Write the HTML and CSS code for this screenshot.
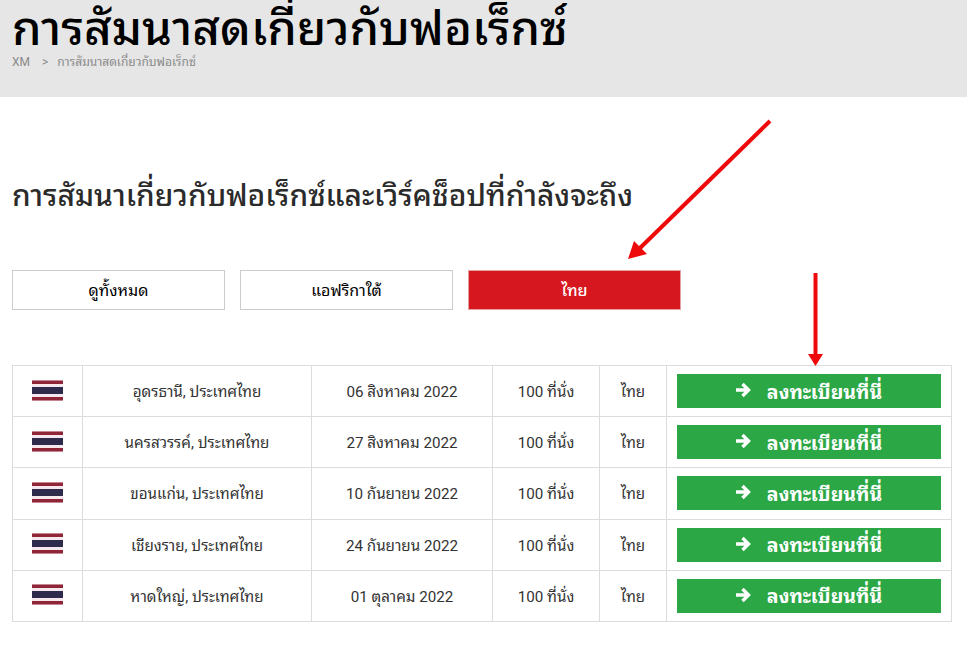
FILE: index.html
```html
<!DOCTYPE html>
<html lang="th">
<head>
<meta charset="utf-8">
<title>การสัมนาสดเกี่ยวกับฟอเร็กซ์</title>
<link rel="stylesheet" href="styles.css">
</head>
<body>
<header class="hero">
  <h1 class="hero-title">การสัมนาสดเกี่ยวกับฟอเร็กซ์</h1>
  <nav class="crumbs"><span>XM</span><span class="crumb-sep">&gt;</span><span>การสัมนาสดเกี่ยวกับฟอเร็กซ์</span></nav>
</header>
<main class="content">
  <h2 class="section-title">การสัมนาเกี่ยวกับฟอเร็กซ์และเวิร์คช็อปที่กำลังจะถึง</h2>
  <div class="filters">
    <button class="filter">ดูทั้งหมด</button>
    <button class="filter">แอฟริกาใต้</button>
    <button class="filter filter-active">ไทย</button>
  </div>
  <table class="seminars">
    <colgroup><col class="c-flag"><col class="c-place"><col class="c-date"><col class="c-seats"><col class="c-lang"><col class="c-action"></colgroup>
    <tbody>
      <tr><td><svg class="flag" viewBox="0 0 31 21"><rect width="31" height="21" fill="#f6e9ee"/><rect y="0.5" width="31" height="3.5" fill="#8f2537"/><rect y="7" width="31" height="7" fill="#2d2a4c"/><rect y="17" width="31" height="3.5" fill="#8f2537"/></svg></td><td>อุดรธานี, ประเทศไทย</td><td>06 สิงหาคม 2022</td><td>100 ที่นั่ง</td><td>ไทย</td><td class="action"><a class="register" href="#"><svg class="go" viewBox="0 0 16 16"><path d="M1 8h12M7.5 2 13.5 8 7.5 14" fill="none" stroke="#fff" stroke-width="3.4"/></svg>ลงทะเบียนที่นี่</a></td></tr>
      <tr><td><svg class="flag" viewBox="0 0 31 21"><rect width="31" height="21" fill="#f6e9ee"/><rect y="0.5" width="31" height="3.5" fill="#8f2537"/><rect y="7" width="31" height="7" fill="#2d2a4c"/><rect y="17" width="31" height="3.5" fill="#8f2537"/></svg></td><td>นครสวรรค์, ประเทศไทย</td><td>27 สิงหาคม 2022</td><td>100 ที่นั่ง</td><td>ไทย</td><td class="action"><a class="register" href="#"><svg class="go" viewBox="0 0 16 16"><path d="M1 8h12M7.5 2 13.5 8 7.5 14" fill="none" stroke="#fff" stroke-width="3.4"/></svg>ลงทะเบียนที่นี่</a></td></tr>
      <tr><td><svg class="flag" viewBox="0 0 31 21"><rect width="31" height="21" fill="#f6e9ee"/><rect y="0.5" width="31" height="3.5" fill="#8f2537"/><rect y="7" width="31" height="7" fill="#2d2a4c"/><rect y="17" width="31" height="3.5" fill="#8f2537"/></svg></td><td>ขอนแก่น, ประเทศไทย</td><td>10 กันยายน 2022</td><td>100 ที่นั่ง</td><td>ไทย</td><td class="action"><a class="register" href="#"><svg class="go" viewBox="0 0 16 16"><path d="M1 8h12M7.5 2 13.5 8 7.5 14" fill="none" stroke="#fff" stroke-width="3.4"/></svg>ลงทะเบียนที่นี่</a></td></tr>
      <tr><td><svg class="flag" viewBox="0 0 31 21"><rect width="31" height="21" fill="#f6e9ee"/><rect y="0.5" width="31" height="3.5" fill="#8f2537"/><rect y="7" width="31" height="7" fill="#2d2a4c"/><rect y="17" width="31" height="3.5" fill="#8f2537"/></svg></td><td>เชียงราย, ประเทศไทย</td><td>24 กันยายน 2022</td><td>100 ที่นั่ง</td><td>ไทย</td><td class="action"><a class="register" href="#"><svg class="go" viewBox="0 0 16 16"><path d="M1 8h12M7.5 2 13.5 8 7.5 14" fill="none" stroke="#fff" stroke-width="3.4"/></svg>ลงทะเบียนที่นี่</a></td></tr>
      <tr><td><svg class="flag" viewBox="0 0 31 21"><rect width="31" height="21" fill="#f6e9ee"/><rect y="0.5" width="31" height="3.5" fill="#8f2537"/><rect y="7" width="31" height="7" fill="#2d2a4c"/><rect y="17" width="31" height="3.5" fill="#8f2537"/></svg></td><td>หาดใหญ่, ประเทศไทย</td><td>01 ตุลาคม 2022</td><td>100 ที่นั่ง</td><td>ไทย</td><td class="action"><a class="register" href="#"><svg class="go" viewBox="0 0 16 16"><path d="M1 8h12M7.5 2 13.5 8 7.5 14" fill="none" stroke="#fff" stroke-width="3.4"/></svg>ลงทะเบียนที่นี่</a></td></tr>
    </tbody>
  </table>
</main>
<svg class="annotations" viewBox="0 0 967 645" aria-hidden="true">
  <path d="M770 121 638 250" stroke="#ee0a0a" stroke-width="4" fill="none"/>
  <path d="M628 259 634 241 647 254Z" fill="#ee0a0a"/>
  <path d="M815.5 273V354" stroke="#ee0a0a" stroke-width="4" fill="none"/>
  <path d="M808 354H823L815.5 366Z" fill="#ee0a0a"/>
</svg>
</body>
</html>
```
FILE: styles.css
```css
* { box-sizing: border-box; }
html, body { margin: 0; padding: 0; }
body {
  position: relative;
  width: 967px;
  height: 645px;
  overflow: hidden;
  background: #fff;
  color: #222;
  font-family: Roboto, "Noto Sans Thai Looped", Tahoma, Loma, Garuda, Waree, "Noto Sans", "Liberation Sans", sans-serif;
}
.hero {
  height: 97px;
  padding: 6px 12px 0;
  background: #e6e6e6;
  overflow: hidden;
}
.hero-title {
  margin: 0;
  height: 46px;
  font-size: 47.4px;
  line-height: 46px;
  font-weight: 500;
  color: #000;
  white-space: nowrap;
}
.crumbs {
  display: flex;
  margin-top: 2px;
  font-size: 12px;
  line-height: 16px;
  color: #8a8a8a;
}
.crumb-sep { margin: 0 9px 0 12px; }
.content { padding: 0 15px 0 12px; }
.section-title {
  margin: 0;
  padding-top: 80px;
  height: 173px;
  font-size: 29.9px;
  line-height: 38px;
  font-weight: 500;
  color: #2b2b2b;
  white-space: nowrap;
}
.filters { display: flex; gap: 15px; }
.filter {
  width: 213px;
  height: 40px;
  padding: 0 0 2px;
  background: #fff;
  border: 1px solid #ccc;
  font: inherit;
  font-size: 16px;
  font-weight: 400;
  color: #000;
}
.filter-active {
  background: #d7171f;
  border-color: #e4a0a3;
  font-weight: 500;
  color: #fff;
}
.seminars {
  width: 939px;
  margin-top: 55px;
  border-collapse: collapse;
  table-layout: fixed;
  font-size: 15.2px;
  color: #333;
}
.c-flag { width: 70px; }
.c-place { width: 229px; }
.c-date { width: 181px; }
.c-seats { width: 107px; }
.c-lang { width: 67px; }
.c-action { width: 285px; }
.seminars td {
  height: 51.2px;
  padding: 0 0 2px;
  border: 1px solid #dcdcdc;
  text-align: center;
  vertical-align: middle;
}
.flag { display: block; width: 31px; height: 21px; margin: 0 auto; }
.seminars td.action { padding: 0 10px; }
.register {
  display: flex;
  align-items: center;
  justify-content: center;
  height: 34px;
  padding: 0 1px 2px 0;
  background: #2ba745;
  color: #fff;
  font-size: 19.5px;
  font-weight: 700;
  text-decoration: none;
}
.go { width: 16px; height: 16px; margin-right: 16px; }
.annotations {
  position: absolute;
  inset: 0;
  width: 967px;
  height: 645px;
  pointer-events: none;
}
```
